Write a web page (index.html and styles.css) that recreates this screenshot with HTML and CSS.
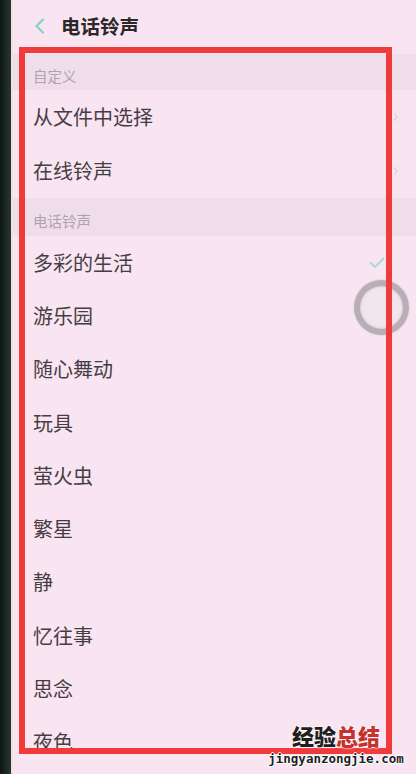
FILE: index.html
```html
<!DOCTYPE html>
<html lang="zh-CN">
<head>
<meta charset="utf-8">
<title>电话铃声</title>
<link rel="stylesheet" href="styles.css">
</head>
<body>
<div class="device">
  <div class="bezel"></div>
  <div class="screen">
    <header class="topbar">
      <svg class="back" width="11" height="16" viewBox="0 0 11 16"><path d="M9 1.5 L2.5 8 L9 14.5" fill="none" stroke="#86d3bd" stroke-width="2.2" stroke-linecap="round" stroke-linejoin="round"/></svg>
      <h1 class="title">电话铃声</h1>
    </header>

    <div class="band band-first"><span>自定义</span></div>
    <div class="row row-tall"><span class="label">从文件中选择</span><svg class="chev" width="5" height="10" viewBox="0 0 5 10"><path d="M1 1 L4 5 L1 9" fill="none" stroke="#ddd0d9" stroke-width="1.2"/></svg></div>
    <div class="row row-tall"><span class="label">在线铃声</span><svg class="chev" width="5" height="10" viewBox="0 0 5 10"><path d="M1 1 L4 5 L1 9" fill="none" stroke="#ddd0d9" stroke-width="1.2"/></svg></div>

    <div class="band band-second"><span>电话铃声</span></div>
    <div class="row"><span class="label">多彩的生活</span><svg class="check" width="16" height="12" viewBox="0 0 16 12"><path d="M1.5 5.5 L6 10 L14.5 1.5" fill="none" stroke="#a9dccf" stroke-width="1.8" stroke-linecap="round" stroke-linejoin="round"/></svg></div>
    <div class="row"><span class="label">游乐园</span></div>
    <div class="row"><span class="label">随心舞动</span></div>
    <div class="row"><span class="label">玩具</span></div>
    <div class="row"><span class="label">萤火虫</span></div>
    <div class="row"><span class="label">繁星</span></div>
    <div class="row"><span class="label">静</span></div>
    <div class="row"><span class="label">忆往事</span></div>
    <div class="row"><span class="label">思念</span></div>
    <div class="row"><span class="label">夜色</span></div>
  </div>

  <div class="touch"></div>
  <div class="highlight"></div>
  <div class="watermark">
    <div class="wm-cn"><span class="wm-dark">经验</span><span class="wm-red">总结</span></div>
    <div class="wm-url">jingyanzongjie.com</div>
  </div>
</div>
</body>
</html>
```

FILE: styles.css
```css
html, body {
  margin: 0;
  padding: 0;
}
body {
  width: 416px;
  height: 774px;
  overflow: hidden;
  background: #f7e5f0;
  font-family: "Noto Sans CJK SC", "Noto Sans", sans-serif;
}
.device {
  position: relative;
  display: flex;
  width: 416px;
  height: 774px;
  overflow: hidden;
}
.bezel {
  width: 11px;
  flex: none;
  background: linear-gradient(90deg, #0e1513 0%, #1c2b26 60%, #2a3430 100%);
  border-right: 2px solid #ece2e8;
}
.screen {
  flex: 1;
  display: flex;
  flex-direction: column;
  background: #f8e5f1;
}
.topbar {
  height: 54px;
  flex: none;
  display: flex;
  align-items: center;
  gap: 16px;
  padding-left: 21px;
  padding-bottom: 3px;
  box-sizing: border-box;
}
.back {
  display: block;
}
.title {
  margin: 0;
  font-size: 19.5px;
  font-weight: 700;
  color: #2b272a;
}
.band {
  flex: none;
  display: flex;
  align-items: flex-end;
  padding-left: 20px;
  box-sizing: border-box;
  background: #efdee9;
  color: #b0a2ad;
  font-size: 14.5px;
  line-height: 1;
}
.band-first {
  height: 36px;
  padding-bottom: 7px;
}
.band-second {
  height: 38px;
  padding-bottom: 8px;
}
.row {
  flex: none;
  height: 53.3px;
  display: flex;
  align-items: center;
  padding-left: 20px;
  padding-right: 18px;
  box-sizing: border-box;
  color: #463d44;
  font-size: 20px;
}
.row-tall {
  height: 54px;
}
.label {
  flex: 1;
  line-height: 1;
}
.chev {
  display: block;
}
.check {
  display: block;
  margin-right: 13px;
}
.touch {
  position: absolute;
  left: 354px;
  top: 280px;
  width: 55px;
  height: 55px;
  box-sizing: border-box;
  border-radius: 50%;
  border: 6px solid rgba(160, 150, 158, 0.7);
  background: rgba(240, 228, 236, 0.6);
  box-shadow: inset 0 0 3px rgba(120, 110, 118, 0.4), 0 0 2px rgba(120, 110, 118, 0.35);
}
.highlight {
  position: absolute;
  left: 19px;
  top: 47px;
  width: 373px;
  height: 707px;
  box-sizing: border-box;
  border: 6px solid #f03b3b;
}
.watermark {
  position: absolute;
  left: 266px;
  top: 724px;
  width: 140px;
  display: flex;
  flex-direction: column;
  align-items: center;
  gap: 7px;
}
.wm-cn {
  font-size: 22px;
  font-weight: 900;
  line-height: 22px;
  height: 22px;
  text-shadow: 0 0 2px #fff, 0 0 2px #fff;
}
.wm-dark {
  color: #1f1f1f;
}
.wm-red {
  color: #c4322c;
}
.wm-url {
  font-family: "DejaVu Sans Mono", monospace;
  font-weight: 700;
  font-size: 12.5px;
  line-height: 12px;
  height: 12px;
  color: #1e1e1e;
  text-shadow: 1px 0 0 #fff, -1px 0 0 #fff, 0 1px 0 #fff, 0 -1px 0 #fff;
}
```
